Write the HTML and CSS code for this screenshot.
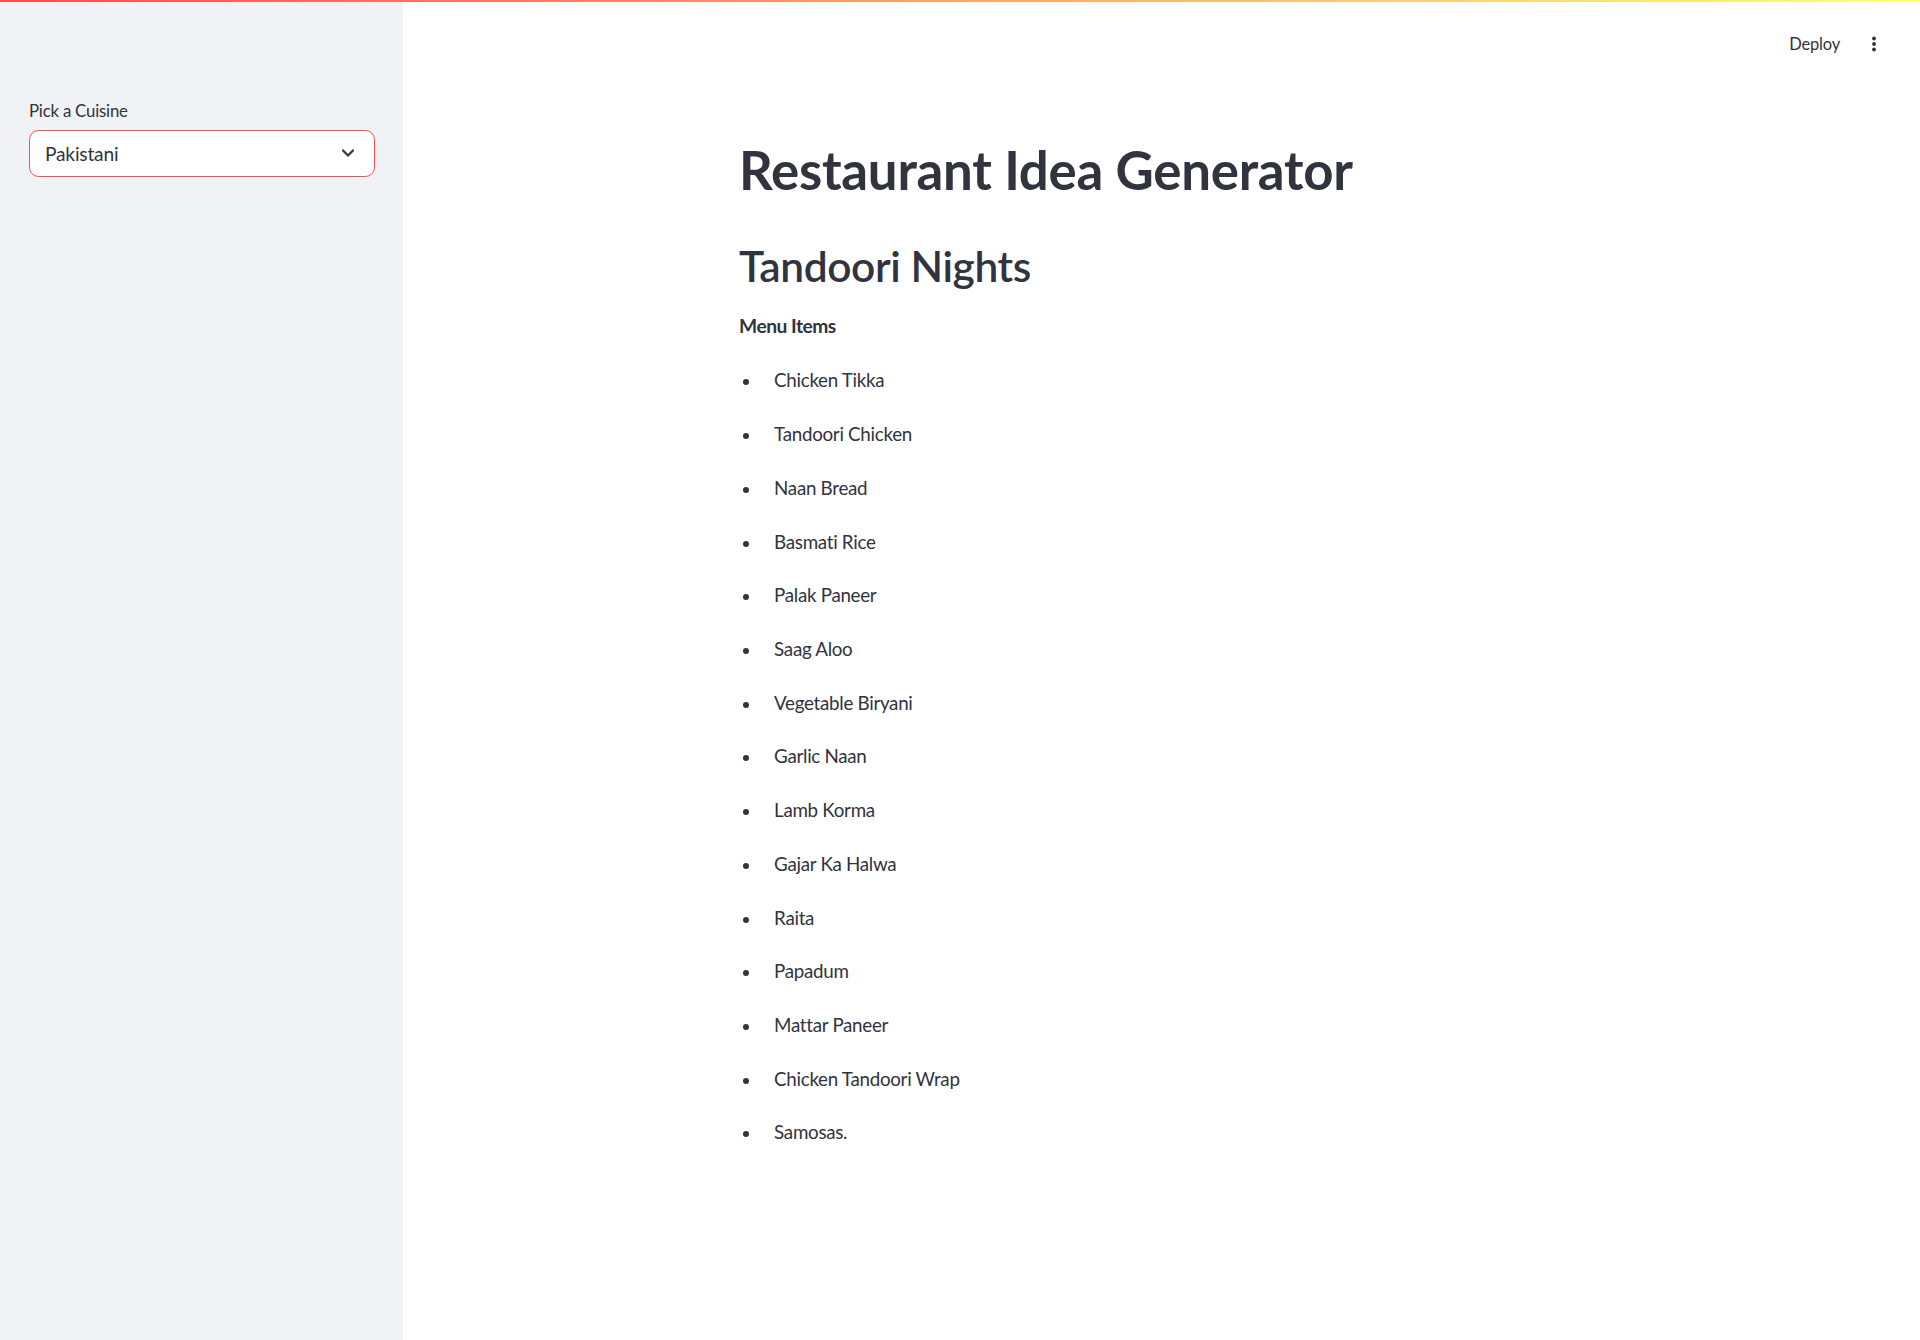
FILE: index.html
```html
<!DOCTYPE html>
<html lang="en">
<head>
<meta charset="utf-8">
<title>Restaurant Idea Generator</title>
<link rel="stylesheet" href="styles.css">
</head>
<body>
<div class="decoration"></div>
<div class="app">
  <aside class="sidebar">
    <label class="widget-label">Pick a Cuisine</label>
    <div class="select">
      <span class="select-value">Pakistani</span>
      <svg class="chevron" width="16" height="16" viewBox="0 0 16 16" aria-hidden="true"><path d="M3 5.5 L8 10.5 L13 5.5" fill="none" stroke="#31333f" stroke-width="2.2" stroke-linecap="round" stroke-linejoin="round"/></svg>
    </div>
  </aside>
  <main class="main">
    <header class="toolbar">
      <span class="deploy">Deploy</span>
      <svg class="menu-dots" width="20" height="20" viewBox="0 0 20 20" aria-hidden="true"><circle cx="10" cy="4.5" r="1.9" fill="#31333f"/><circle cx="10" cy="10" r="1.9" fill="#31333f"/><circle cx="10" cy="15.5" r="1.9" fill="#31333f"/></svg>
    </header>
    <section class="block">
      <h1 class="title">Restaurant Idea Generator</h1>
      <h2 class="name">Tandoori Nights</h2>
      <p class="menu-label">Menu Items</p>
      <ul class="items">
        <li>Chicken Tikka</li>
        <li>Tandoori Chicken</li>
        <li>Naan Bread</li>
        <li>Basmati Rice</li>
        <li>Palak Paneer</li>
        <li>Saag Aloo</li>
        <li>Vegetable Biryani</li>
        <li>Garlic Naan</li>
        <li>Lamb Korma</li>
        <li>Gajar Ka Halwa</li>
        <li>Raita</li>
        <li>Papadum</li>
        <li>Mattar Paneer</li>
        <li>Chicken Tandoori Wrap</li>
        <li>Samosas.</li>
      </ul>
    </section>
  </main>
</div>
</body>
</html>
```
FILE: styles.css
```css
* { box-sizing: border-box; }

html, body {
  margin: 0;
  padding: 0;
  height: 100%;
}

body {
  font-family: Lato, "Noto Sans", sans-serif;
  color: #31333f;
  background: #ffffff;
  display: flex;
  flex-direction: column;
  min-height: 1340px;
}

.decoration {
  height: 2px;
  flex: 0 0 2px;
  background: linear-gradient(90deg, #ff4b4b, #fffd80);
}

.app {
  flex: 1;
  display: flex;
}

.sidebar {
  width: 403px;
  flex: 0 0 403px;
  background: #f0f2f6;
  padding: 96px 28px 0 29px;
  display: flex;
  flex-direction: column;
}

.widget-label {
  font-size: 16.8px;
  line-height: 1.6;
  margin-bottom: 5px;
  letter-spacing: -0.2px;
}

.select {
  height: 47px;
  border: 1px solid #ff4b4b;
  border-radius: 9.6px;
  background: #ffffff;
  display: flex;
  align-items: center;
  justify-content: space-between;
  padding: 0 18px 0 15px;
}

.select-value {
  font-size: 19.2px;
  letter-spacing: -0.2px;
}

.chevron { display: block; }

.main {
  flex: 1;
  display: flex;
  flex-direction: column;
}

.toolbar {
  height: 83px;
  display: flex;
  align-items: center;
  justify-content: flex-end;
  gap: 24px;
  padding-right: 36px;
}

.deploy {
  font-size: 16.5px;
  letter-spacing: -0.2px;
}

.menu-dots { display: block; }

.block {
  width: 100%;
  max-width: 883.2px;
  margin: 0 auto;
  padding: 53px 19.2px 0;
}

.title {
  font-size: 52.8px;
  font-weight: 700;
  line-height: 1.2;
  letter-spacing: -0.25px;
  margin: 0;
}

.name {
  font-size: 42.5px;
  font-weight: 600;
  line-height: 1.2;
  letter-spacing: -0.4px;
  margin: 39px 0 0;
}

.menu-label {
  font-size: 19.2px;
  font-weight: 700;
  line-height: 1.6;
  letter-spacing: -0.5px;
  margin: 20px 0 0;
}

.items {
  list-style: none;
  margin: 23px 0 0;
  padding: 0;
  display: flex;
  flex-direction: column;
  gap: 23px;
}

.items li {
  font-size: 18.8px;
  line-height: 1.6;
  letter-spacing: -0.3px;
  display: flex;
  align-items: center;
  height: 30.72px;
}

.items li::before {
  content: "";
  width: 6px;
  height: 6px;
  border-radius: 50%;
  background: #31333f;
  margin: 4px 25px 0 4px;
  flex: 0 0 auto;
}
```
